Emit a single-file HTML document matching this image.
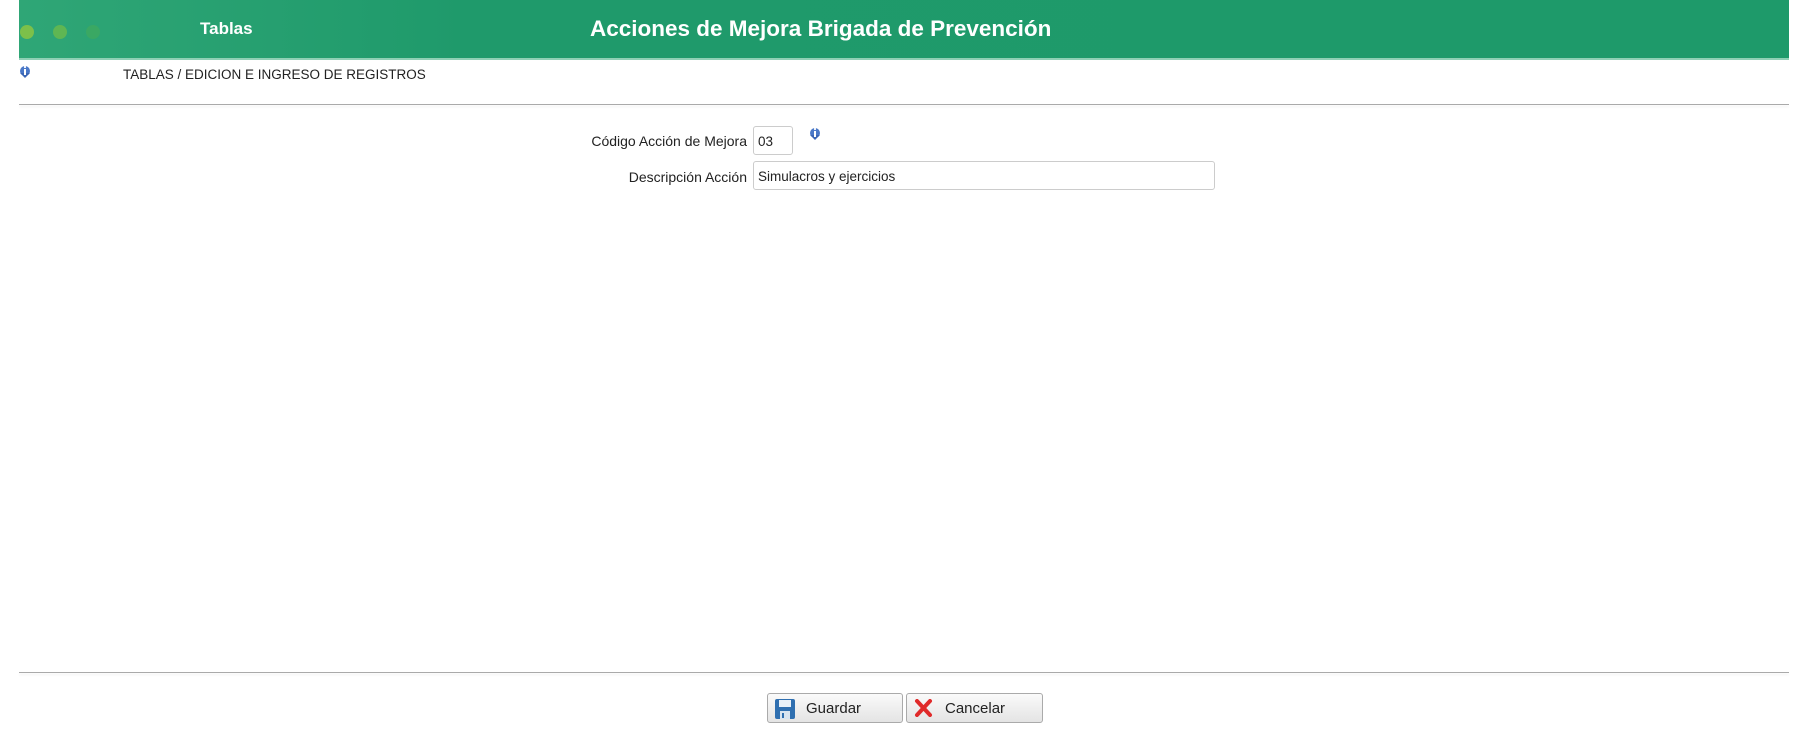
<!DOCTYPE html>
<html><head><meta charset="utf-8"><style>
body{margin:0;width:1798px;height:744px;background:#fff;font-family:"Liberation Sans",Tahoma,sans-serif;position:relative;overflow:hidden;color:#222}
.hdr{position:absolute;left:19px;top:0;width:1770px;height:60px;background:linear-gradient(90deg,#2fa676 0%,#1f9a6b 25%,#1e9a6a 100%);border-bottom:2px solid #8fd0b5;box-sizing:border-box}
.dot{position:absolute;top:25px;width:14px;height:14px;border-radius:50%}
.t1{position:absolute;top:19px;color:#fff;font-weight:bold;font-size:17px}
.t2{position:absolute;top:16px;color:#fff;font-weight:bold;font-size:22.5px}
.bc{position:absolute;left:123px;top:67px;font-size:13.5px}
.hr{position:absolute;left:19px;width:1770px;height:1px;background:#aaa;box-shadow:0 2px 2px #eee}
.lbl{position:absolute;font-size:14px;text-align:right}
.inp{position:absolute;border:1px solid #ccc;border-radius:3px;box-sizing:border-box;font-size:13.5px;padding:7px 4px 0}
.btn{position:absolute;top:693px;height:30px;border:1px solid #aaa;border-radius:3px;box-sizing:border-box;background:linear-gradient(#fafafa,#e4e4e4);font-size:15px;color:#222}
.btn span{position:absolute;left:38px;top:6px}
</style></head><body>
<div class="hdr">
<div class="dot" style="left:1px;background:#7cc04a"></div>
<div class="dot" style="left:34px;background:#5fb653"></div>
<div class="dot" style="left:67px;background:#3aa863"></div>
<div class="t1" style="left:181px">Tablas</div>
<div class="t2" style="left:571px">Acciones de Mejora Brigada de Prevención</div>
</div>
<svg style="position:absolute;left:19px;top:64px" width="12" height="15" viewBox="0 0 12 15"><circle cx="6" cy="7" r="5" fill="#4a78c8"/><path d="M1 9 L6 14 L11 9" fill="#3b66b5"/><rect x="5" y="5" width="2" height="6" fill="#fff"/><circle cx="6" cy="3" r="1.1" fill="#fff"/></svg>
<div class="bc">TABLAS / EDICION E INGRESO DE REGISTROS</div>
<div class="hr" style="top:104px"></div>
<div class="lbl" style="right:1051px;top:133px">Código Acción de Mejora</div>
<div class="inp" style="left:753px;top:126px;width:40px;height:29px">03</div>
<svg style="position:absolute;left:809px;top:126px" width="12" height="15" viewBox="0 0 12 15"><circle cx="6" cy="7" r="5" fill="#4a78c8"/><path d="M1 9 L6 14 L11 9" fill="#3b66b5"/><rect x="5" y="5" width="2" height="6" fill="#fff"/><circle cx="6" cy="3" r="1.1" fill="#fff"/></svg>
<div class="lbl" style="right:1051px;top:169px">Descripción Acción</div>
<div class="inp" style="left:753px;top:161px;width:462px;height:29px">Simulacros y ejercicios</div>
<div class="hr" style="top:672px"></div>
<div class="btn" style="left:767px;width:136px">
<svg style="position:absolute;left:6px;top:4px" width="22" height="22" viewBox="0 0 22 22"><rect x="1" y="1" width="20" height="20" rx="2" fill="#2f6fb0"/><rect x="5" y="2" width="12" height="7" fill="#e8f0f8"/><rect x="6" y="13" width="10" height="8" fill="#d8e4f0"/><rect x="8" y="15" width="2" height="5" fill="#2f6fb0"/></svg>
<span>Guardar</span></div>
<div class="btn" style="left:906px;width:137px">
<svg style="position:absolute;left:7px;top:5px" width="19" height="18" viewBox="0 0 19 18"><path d="M3 2 L16 16 M16 2 L3 16" stroke="#e02a2a" stroke-width="4" stroke-linecap="round"/></svg>
<span>Cancelar</span></div>
</body></html>
